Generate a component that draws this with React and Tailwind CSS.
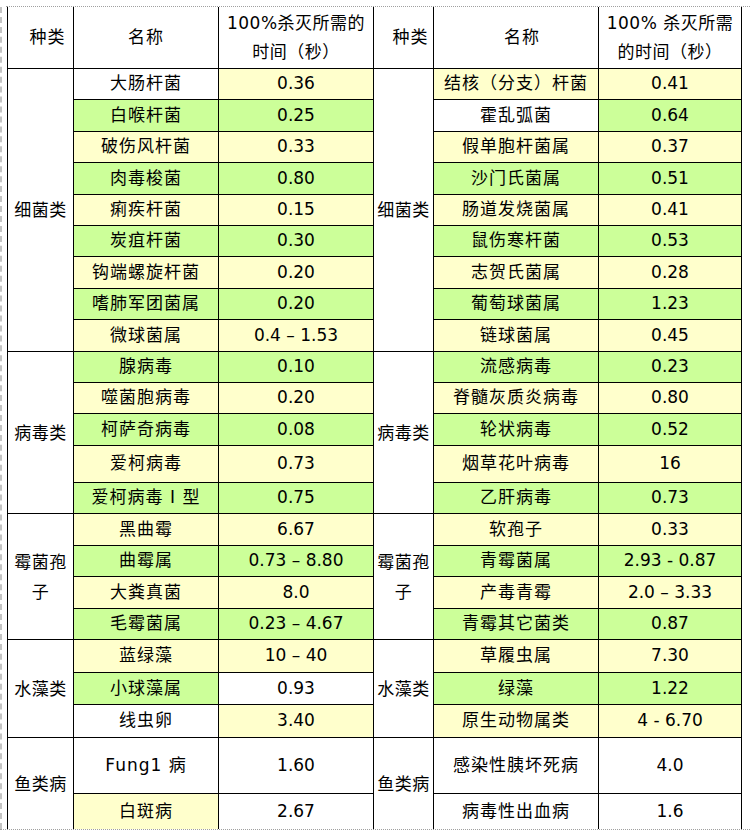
import React from "react";

const bg = { w: "bg-white", y: "bg-[#ffffcc]", g: "bg-[#ccff99]" };
const spanCls = { 9: "row-span-9", 5: "row-span-5", 4: "row-span-4", 3: "row-span-3", 2: "row-span-2" };

// [名称, 底色, 时间, 底色] 左右两半
const groups = [
  {
    name: "细菌类",
    rows: [
      [["大肠杆菌", "w", "0.36", "y"], ["结核（分支）杆菌", "y", "0.41", "y"]],
      [["白喉杆菌", "g", "0.25", "g"], ["霍乱弧菌", "w", "0.64", "g"]],
      [["破伤风杆菌", "y", "0.33", "y"], ["假单胞杆菌属", "y", "0.37", "y"]],
      [["肉毒梭菌", "g", "0.80", "g"], ["沙门氏菌属", "g", "0.51", "g"]],
      [["痢疾杆菌", "y", "0.15", "y"], ["肠道发烧菌属", "y", "0.41", "y"]],
      [["炭疽杆菌", "g", "0.30", "g"], ["鼠伤寒杆菌", "g", "0.53", "g"]],
      [["钩端螺旋杆菌", "y", "0.20", "y"], ["志贺氏菌属", "y", "0.28", "y"]],
      [["嗜肺军团菌属", "g", "0.20", "g"], ["葡萄球菌属", "g", "1.23", "g"]],
      [["微球菌属", "y", "0.4 – 1.53", "y"], ["链球菌属", "y", "0.45", "y"]],
    ],
  },
  {
    name: "病毒类",
    rows: [
      [["腺病毒", "g", "0.10", "g"], ["流感病毒", "g", "0.23", "g"]],
      [["噬菌胞病毒", "y", "0.20", "y"], ["脊髓灰质炎病毒", "y", "0.80", "y"]],
      [["柯萨奇病毒", "g", "0.08", "g"], ["轮状病毒", "g", "0.52", "g"]],
      [["爱柯病毒", "y", "0.73", "y"], ["烟草花叶病毒", "y", "16", "y"]],
      [["爱柯病毒 Ⅰ 型", "g", "0.75", "g"], ["乙肝病毒", "g", "0.73", "g"]],
    ],
  },
  {
    name: "霉菌孢子",
    rows: [
      [["黑曲霉", "y", "6.67", "y"], ["软孢子", "y", "0.33", "y"]],
      [["曲霉属", "g", "0.73 – 8.80", "g"], ["青霉菌属", "g", "2.93 - 0.87", "g"]],
      [["大粪真菌", "y", "8.0", "y"], ["产毒青霉", "y", "2.0 – 3.33", "y"]],
      [["毛霉菌属", "g", "0.23 – 4.67", "g"], ["青霉其它菌类", "g", "0.87", "g"]],
    ],
  },
  {
    name: "水藻类",
    rows: [
      [["蓝绿藻", "y", "10 – 40", "y"], ["草履虫属", "y", "7.30", "y"]],
      [["小球藻属", "g", "0.93", "w"], ["绿藻", "g", "1.22", "g"]],
      [["线虫卵", "w", "3.40", "y"], ["原生动物属类", "y", "4 - 6.70", "y"]],
    ],
  },
  {
    name: "鱼类病",
    rows: [
      [["Fung1 病", "w", "1.60", "w"], ["感染性胰坏死病", "w", "4.0", "w"]],
      [["白斑病", "y", "2.67", "w"], ["病毒性出血病", "w", "1.6", "w"]],
    ],
  },
];

const Cell = ({ c, className = "", children }) => (
  <div className={`flex items-center justify-center text-center ${bg[c]} ${className}`}>
    {children}
  </div>
);

const App = () => {
  const cells = [];
  groups.forEach((g, gi) => {
    g.rows.forEach((row, ri) => {
      row.forEach((half, hi) => {
        if (ri === 0) {
          cells.push(
            <Cell key={`g${gi}-${hi}`} c="w" className={`${spanCls[g.rows.length]} leading-[30px] px-[3px] tracking-[0.5px]`}>
              {g.name}
            </Cell>
          );
        }
        cells.push(
          <Cell key={`n${gi}-${ri}-${hi}`} c={half[1]} className="whitespace-nowrap tracking-[1px]">
            {half[0]}
          </Cell>
        );
        cells.push(
          <Cell key={`t${gi}-${ri}-${hi}`} c={half[3]} className="whitespace-nowrap">
            {half[2]}
          </Cell>
        );
      });
    });
  });

  return (
    <div className="w-[750px] h-[838px] bg-white pt-[6px] text-black text-[17px] font-['DejaVu_Sans','Noto_Sans_CJK_SC',sans-serif]">
      <div className="ml-[6px] border-t border-dotted border-[#a0a0a0]" />
      <div className="flex">
        <div className="w-[2px] border-l-2 border-dashed border-[#c4c4c4]" />
        <div className="ml-[5px] grid grid-cols-[65px_144px_154px_59px_164px_142px] grid-rows-[61px_30px_31px_30px_31px_30px_30px_31px_30px_31px_30px_30px_31px_36px_30px_31px_30px_31px_30px_32px_31px_32px_55px_35px] gap-px bg-black border-x border-black">
          <Cell c="w" className="pl-[14px] tracking-[1px]">种类</Cell>
          <Cell c="w" className="tracking-[1px]">名称</Cell>
          <Cell c="w" className="leading-[29px] tracking-[0.5px]">
            100%杀灭所需的
            <br />
            时间（秒）
          </Cell>
          <Cell c="w" className="pl-[14px] tracking-[1px]">种类</Cell>
          <Cell c="w" className="pl-[12px] tracking-[1px]">名称</Cell>
          <Cell c="w" className="leading-[29px] tracking-[0.5px]">
            100% 杀灭所需
            <br />
            的时间（秒）
          </Cell>
          {cells}
        </div>
      </div>
      <div className="border-t border-dotted border-[#a0a0a0]" />
    </div>
  );
};

export default App;
